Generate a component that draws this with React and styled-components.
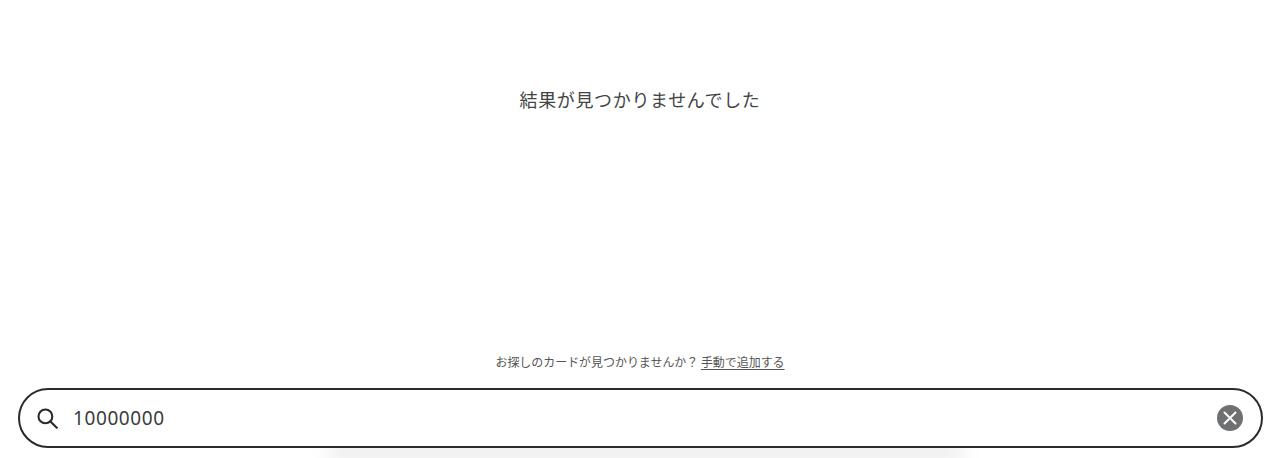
import React from "react";
import styled, { createGlobalStyle } from "styled-components";

const Global = createGlobalStyle`
  html, body { margin: 0; padding: 0; background: #fff; overflow: hidden; }
  body { font-family: "Noto Sans CJK JP", "Noto Sans", sans-serif; }
`;

const Page = styled.main`
  width: 1280px;
  height: 458px;
  display: flex;
  flex-direction: column;
  align-items: center;
  overflow: hidden;
  background: #fff;
`;

const Title = styled.h1`
  margin: 87px 0 0;
  height: 25px;
  font-size: 18px;
  line-height: 25px;
  font-weight: 400;
  letter-spacing: 0.65px;
  color: #444444;
  white-space: nowrap;
`;

const Helper = styled.p`
  margin: auto 0 0;
  height: 18px;
  font-size: 12px;
  line-height: 18px;
  letter-spacing: -0.05px;
  color: #555555;
  white-space: nowrap;
`;

const AddLink = styled.a`
  color: inherit;
  text-decoration: underline;
  text-underline-offset: 2px;
`;

const BarWrap = styled.div`
  width: 1245px;
  margin: 17px 0 10px;
  position: relative;
  &::after {
    content: "";
    position: absolute;
    left: 310px;
    right: 300px;
    top: 56px;
    height: 16px;
    background: #e8e8e8;
    filter: blur(10px);
    z-index: 0;
  }
`;

const SearchBar = styled.div`
  position: relative;
  z-index: 1;
  box-sizing: border-box;
  height: 60px;
  border: 2px solid #2b2b2b;
  border-radius: 30px;
  background: #fff;
  display: flex;
  align-items: center;
  padding: 0 18px 0 17.5px;
`;

const SearchIcon = styled.svg`
  width: 21px;
  height: 21px;
  flex: none;
  color: #2b2b2b;
`;

const Query = styled.span`
  flex: 1;
  margin-left: 15px;
  font-family: "Noto Sans", sans-serif;
  font-size: 19px;
  line-height: 24px;
  letter-spacing: 0.6px;
  color: #3c3c3c;
`;

const Clear = styled.button`
  width: 26px;
  height: 26px;
  padding: 0;
  border: 0;
  border-radius: 50%;
  background: #6e7072;
  display: flex;
  align-items: center;
  justify-content: center;
`;

export default function App() {
  return (
    <Page>
      <Global />
      <Title>結果が見つかりませんでした</Title>
      <Helper>
        お探しのカードが見つかりませんか？ <AddLink>手動で追加する</AddLink>
      </Helper>
      <BarWrap>
        <SearchBar>
          <SearchIcon viewBox="0 0 21 21" fill="none" stroke="currentColor" strokeWidth="2.1" strokeLinecap="round">
            <circle cx="8.4" cy="8.4" r="6.9" />
            <path d="M13.4 13.4 L19.8 19.8" />
          </SearchIcon>
          <Query>10000000</Query>
          <Clear aria-label="clear">
            <svg width="14" height="14" viewBox="0 0 14 14" fill="none" stroke="#fff" strokeWidth="2" strokeLinecap="round">
              <path d="M1.5 1.5 L12.5 12.5 M12.5 1.5 L1.5 12.5" />
            </svg>
          </Clear>
        </SearchBar>
      </BarWrap>
    </Page>
  );
}
